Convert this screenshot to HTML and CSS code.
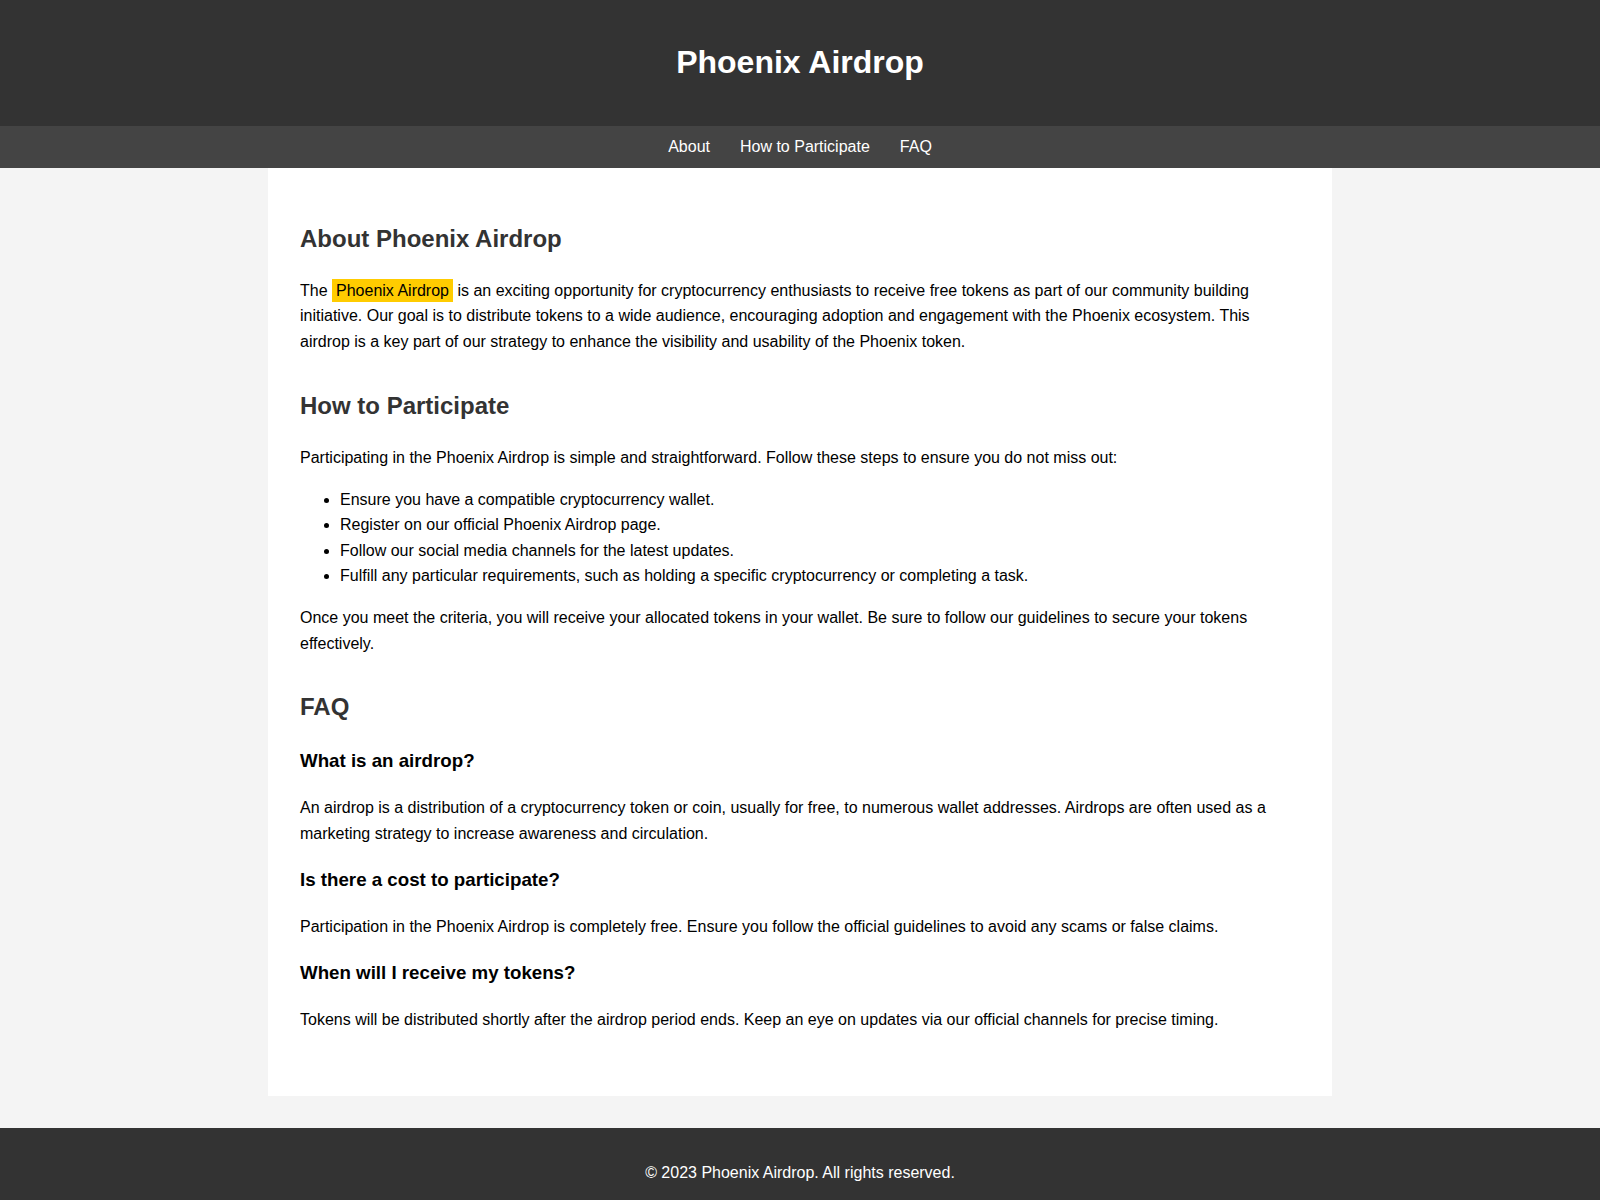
FILE: index.html
```html
<!DOCTYPE html>
<html lang="en">
<head>
<meta charset="utf-8">
<title>Phoenix Airdrop</title>
<link rel="stylesheet" href="styles.css">
</head>
<body>
<header class="site-header">
  <h1 class="site-title">Phoenix Airdrop</h1>
</header>
<nav class="site-nav">
  <a href="#about">About</a>
  <a href="#participate">How to Participate</a>
  <a href="#faq">FAQ</a>
</nav>
<main class="container">
  <section class="section" id="about">
    <h2>About Phoenix Airdrop</h2>
    <p>The <span class="highlight">Phoenix Airdrop</span> is an exciting opportunity for cryptocurrency enthusiasts to receive free tokens as part of our community building initiative. Our goal is to distribute tokens to a wide audience, encouraging adoption and engagement with the Phoenix ecosystem. This airdrop is a key part of our strategy to enhance the visibility and usability of the Phoenix token.</p>
  </section>
  <section class="section" id="participate">
    <h2>How to Participate</h2>
    <p>Participating in the Phoenix Airdrop is simple and straightforward. Follow these steps to ensure you do not miss out:</p>
    <ul>
      <li>Ensure you have a compatible cryptocurrency wallet.</li>
      <li>Register on our official Phoenix Airdrop page.</li>
      <li>Follow our social media channels for the latest updates.</li>
      <li>Fulfill any particular requirements, such as holding a specific cryptocurrency or completing a task.</li>
    </ul>
    <p>Once you meet the criteria, you will receive your allocated tokens in your wallet. Be sure to follow our guidelines to secure your tokens effectively.</p>
  </section>
  <section class="section" id="faq">
    <h2>FAQ</h2>
    <h3>What is an airdrop?</h3>
    <p>An airdrop is a distribution of a cryptocurrency token or coin, usually for free, to numerous wallet addresses. Airdrops are often used as a marketing strategy to increase awareness and circulation.</p>
    <h3>Is there a cost to participate?</h3>
    <p>Participation in the Phoenix Airdrop is completely free. Ensure you follow the official guidelines to avoid any scams or false claims.</p>
    <h3>When will I receive my tokens?</h3>
    <p>Tokens will be distributed shortly after the airdrop period ends. Keep an eye on updates via our official channels for precise timing.</p>
  </section>
</main>
<footer class="site-footer">
  <p>&copy; 2023 Phoenix Airdrop. All rights reserved.</p>
</footer>
</body>
</html>
```

FILE: styles.css
```css
html, body {
  margin: 0;
  padding: 0;
}
body {
  font-family: Arial, "Liberation Sans", sans-serif;
  line-height: 1.6;
  background: #f4f4f4;
  color: #000;
}
.site-header {
  background: #333;
  color: #fff;
  text-align: center;
  padding: 1rem 0;
}
.site-title {
  font-size: 2em;
  margin: 0.67em 0;
}
.site-nav {
  background: #444;
  display: flex;
  justify-content: center;
  padding: 0.5rem 0;
}
.site-nav a {
  color: #fff;
  text-decoration: none;
  margin: 0 15px;
}
.container {
  max-width: 1000px;
  margin: 0 auto 2rem;
  padding: 2rem;
  background: #fff;
}
.section {
  margin-bottom: 2rem;
}
.section h2 {
  color: #333;
  font-size: 1.5em;
  margin: 0.83em 0;
}
.section h3 {
  font-size: 1.17em;
  margin: 1em 0;
}
.highlight {
  background: #ffcc00;
  padding: 3px 4px;
}
.site-footer {
  background: #333;
  color: #fff;
  text-align: center;
  padding: 1rem 0;
}
.site-footer p {
  margin: 1rem 0;
}
```
